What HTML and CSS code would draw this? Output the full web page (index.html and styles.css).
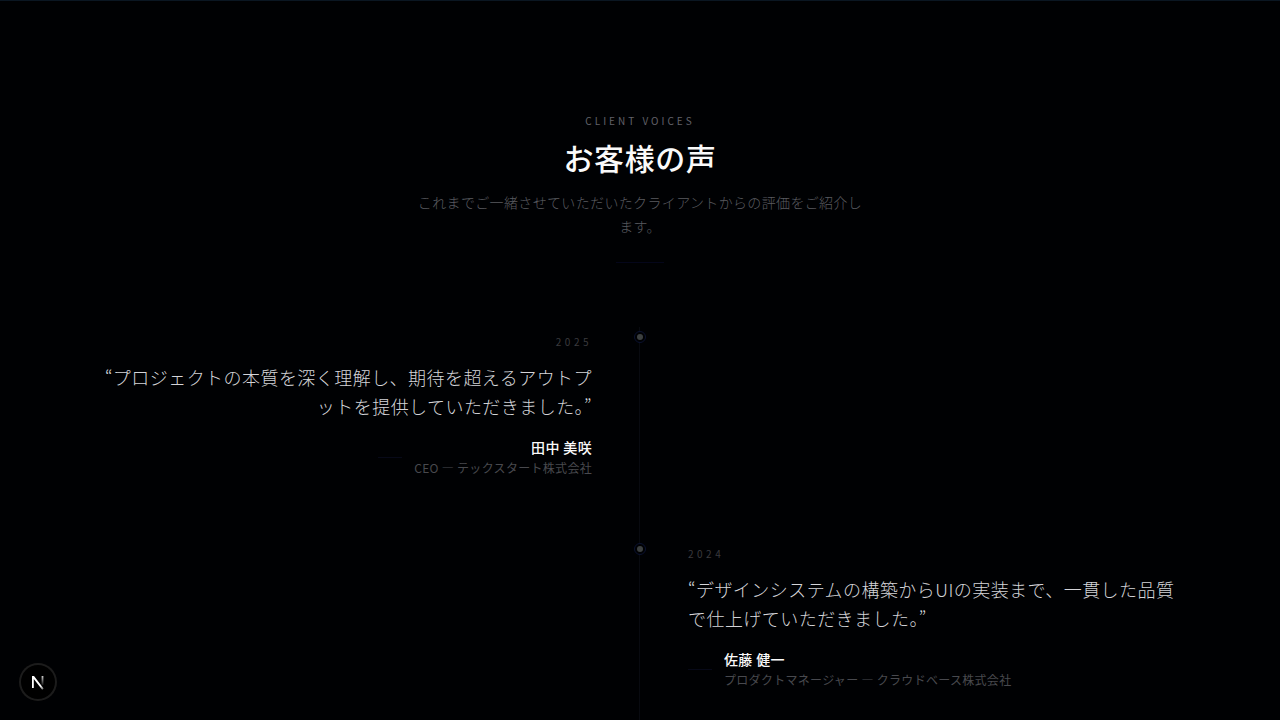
FILE: index.html
```html
<!DOCTYPE html>
<html lang="ja">
<head>
    <meta charset="UTF-8">
    <meta name="viewport" content="width=device-width, initial-scale=1.0">
    <title>お客様の声</title>
    <link rel="stylesheet" href="styles.css">
</head>
<body>
    <section class="voices">
        <header class="voices-header">
            <p class="eyebrow">CLIENT VOICES</p>
            <h2>お客様の声</h2>
            <p class="lead">これまでご一緒させていただいたクライアントからの評価をご紹介します。</p>
            <div class="divider"></div>
        </header>

        <div class="timeline">
            <article class="voice voice-left">
                <div class="voice-body">
                    <p class="year">2025</p>
                    <blockquote>“プロジェクトの本質を深く理解し、期待を超えるアウトプットを提供していただきました。”</blockquote>
                    <div class="author">
                        <span class="dash"></span>
                        <div>
                            <p class="name">田中 美咲</p>
                            <p class="role">CEO — テックスタート株式会社</p>
                        </div>
                    </div>
                </div>
                <span class="dot"></span>
            </article>

            <article class="voice voice-right">
                <span class="dot"></span>
                <div class="voice-body">
                    <p class="year">2024</p>
                    <blockquote>“デザインシステムの構築からUIの実装まで、一貫した品質で仕上げていただきました。”</blockquote>
                    <div class="author">
                        <span class="dash"></span>
                        <div>
                            <p class="name">佐藤 健一</p>
                            <p class="role">プロダクトマネージャー — クラウドベース株式会社</p>
                        </div>
                    </div>
                </div>
            </article>
        </div>
    </section>

    <button class="dev-badge" type="button" aria-label="Next.js">
        <svg width="38" height="38" viewBox="0 0 38 38" fill="none">
            <defs>
                <linearGradient id="diag" x1="13" y1="13" x2="25" y2="27" gradientUnits="userSpaceOnUse">
                    <stop offset="0.7" stop-color="#fff"/>
                    <stop offset="1" stop-color="#fff" stop-opacity="0.3"/>
                </linearGradient>
                <linearGradient id="stem" x1="0" y1="13" x2="0" y2="22" gradientUnits="userSpaceOnUse">
                    <stop offset="0" stop-color="#fff" stop-opacity="0.8"/>
                    <stop offset="1" stop-color="#fff" stop-opacity="0.1"/>
                </linearGradient>
            </defs>
            <path d="M13 13H15L24.6 25.6L23.2 26.8L14.8 16V25H13Z" fill="url(#diag)"/>
            <path d="M22.6 13H24.4V22H22.6Z" fill="url(#stem)"/>
        </svg>
    </button>
</body>
</html>
```

FILE: styles.css
```css
* {
    box-sizing: border-box;
    margin: 0;
    padding: 0;
}

body {
    background: #000103;
    color: #fafafa;
    font-family: "Noto Sans CJK JP", sans-serif;
}

.voices {
    display: flex;
    flex-direction: column;
    min-height: 100vh;
    border-top: 1px solid #0a1622;
    padding: 112px 32px 0;
}

.voices-header {
    display: flex;
    flex-direction: column;
    align-items: center;
    max-width: 448px;
    margin: 0 auto;
    text-align: center;
}

.eyebrow {
    font-size: 10px;
    line-height: 16px;
    letter-spacing: 0.3em;
    color: #62626a;
}

h2 {
    margin-top: 10px;
    font-size: 30px;
    font-weight: 500;
    line-height: 36px;
    letter-spacing: 0.02em;
}

.lead {
    margin-top: 15px;
    font-size: 14px;
    font-weight: 300;
    line-height: 24px;
    letter-spacing: 0.025em;
    color: #5a5b60;
}

.divider {
    width: 48px;
    height: 1px;
    margin-top: 24px;
    background: #04061a;
}

.timeline {
    flex: 1;
    width: 100%;
    max-width: 1100px;
    margin: 64px auto 0;
    background: linear-gradient(#080a10, #080a10) calc(50% - 1px) 0 / 1px 100% no-repeat;
}

.voice {
    display: grid;
    grid-template-columns: 1fr 12px 1fr;
    column-gap: 42px;
    padding-top: 4px;
    padding-bottom: 61px;
}

.voice:last-child {
    padding-bottom: 0;
}

.dot {
    display: flex;
    align-items: center;
    justify-content: center;
    grid-column: 2;
    width: 12px;
    height: 12px;
    border: 1px solid #0a1230;
    border-radius: 50%;
    background: #000103;
}

.dot::before {
    content: "";
    width: 6px;
    height: 6px;
    border-radius: 50%;
    background: #3c4040;
}

.voice-body {
    padding-top: 3px;
}

.voice-left .voice-body {
    text-align: right;
}

.year {
    font-size: 10px;
    line-height: 16px;
    letter-spacing: 0.35em;
    color: #3a3a3e;
}

blockquote {
    margin-top: 13px;
    font-size: 18px;
    font-weight: 300;
    line-height: 29px;
    letter-spacing: 0.025em;
    color: #d4d4d8;
}

.author {
    display: flex;
    align-items: center;
    gap: 12px;
    margin-top: 16px;
}

.voice-left .author {
    justify-content: flex-end;
}

.dash {
    width: 24px;
    height: 1px;
    background: #070918;
}

.name {
    font-size: 14px;
    font-weight: 500;
    line-height: 20px;
    letter-spacing: 0.025em;
}

.role {
    font-size: 12px;
    line-height: 21px;
    letter-spacing: 0.025em;
    color: #48494e;
}

.dev-badge {
    position: fixed;
    left: 19px;
    bottom: 19px;
    width: 38px;
    height: 38px;
    border: 0;
    border-radius: 50%;
    background: #000;
    box-shadow: inset 0 0 0 2px #1c1c1c;
    cursor: pointer;
}

.dev-badge svg {
    display: block;
}
```
